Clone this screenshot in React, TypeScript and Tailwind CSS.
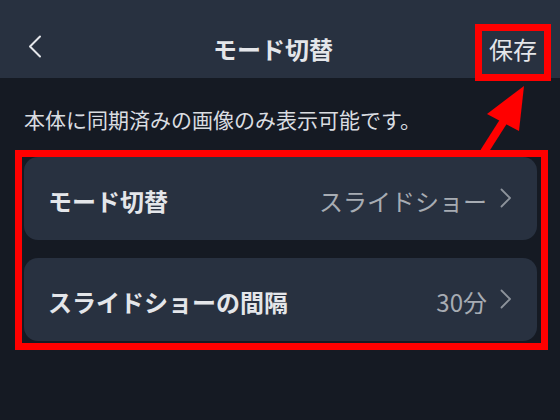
import React from "react";

const font = { fontFamily: '"Noto Sans CJK JP", "Noto Sans", sans-serif' };

function Chevron({ className }: { className?: string }) {
  return (
    <svg width="12" height="20" viewBox="0 0 12 20" className={className} fill="none">
      <path d="M1.5 1.5 L10 10 L1.5 18.5" stroke="currentColor" strokeWidth="1.8" strokeLinecap="round" strokeLinejoin="round" />
    </svg>
  );
}

function Row({ label, value }: { label: string; value: string }) {
  return (
    <div className="h-[83px] rounded-[14px] bg-[#283140] flex items-center pl-[24px] pr-[25px] pt-[5px]">
      <span className="text-[24px] leading-[30px] font-bold text-[#e4e6ea]">{label}</span>
      <span className="ml-auto text-[24px] leading-[30px] text-[#a7acb3]">{value}</span>
      <Chevron className="ml-[13px] -mt-[6px] text-[#8d939b]" />
    </div>
  );
}

export default function App() {
  return (
    <div className="relative w-[560px] h-[420px] overflow-hidden bg-[#151a23]" style={font}>
      <div className="h-[78px] bg-[#283140] flex items-center pt-[20px] pl-[28px] pr-[23px]">
        <svg width="14" height="23" viewBox="0 0 14 23" fill="none" className="-mt-[6px] text-[#e4e6ea]">
          <path d="M12 1.5 L2 11.5 L12 21.5" stroke="currentColor" strokeWidth="2" strokeLinecap="round" strokeLinejoin="round" />
        </svg>
        <span className="ml-[171px] text-[24px] leading-[30px] font-bold text-[#e4e6ea]">モード切替</span>
        <span className="ml-auto text-[24px] leading-[30px] text-[#e4e6ea]">保存</span>
      </div>
      <p className="mt-[26px] pl-[24px] text-[21px] leading-[30px] text-[#dadde1]">
        本体に同期済みの画像のみ表示可能です。
      </p>
      <div className="mt-[16px] ml-[15px] w-[533px] border-[7px] border-[#ff0000] pl-[2px] pr-[4px] pb-[2px] flex flex-col gap-[18px]">
        <Row label="モード切替" value="スライドショー" />
        <Row label="スライドショーの間隔" value="30分" />
      </div>

      <div className="absolute left-[475px] top-[24px] w-[76px] h-[57px] border-[7px] border-[#ff0000]" />
      <svg className="absolute left-0 top-0" width="560" height="420" viewBox="0 0 560 420" fill="none">
        <polygon points="524,86 487,114 519,131" fill="#ff0000" />
        <line x1="505" y1="119" x2="484" y2="152" stroke="#ff0000" strokeWidth="8" />
      </svg>
    </div>
  );
}
